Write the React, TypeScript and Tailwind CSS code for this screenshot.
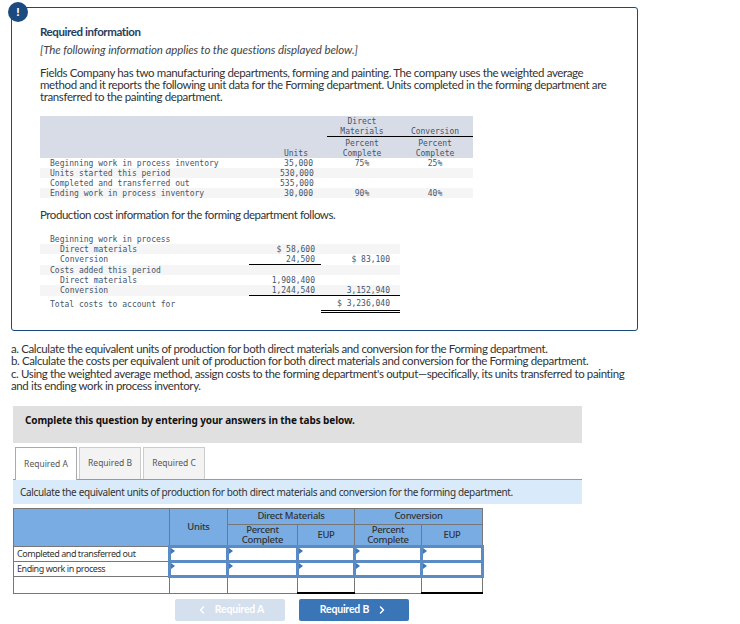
import { ChevronLeft, ChevronRight } from 'lucide-react';

const unitRows = [
  { label: 'Beginning work in process inventory', units: '35,000', dm: '75%', conv: '25%', bg: 'bg-white' },
  { label: 'Units started this period', units: '530,000', dm: '', conv: '', bg: 'bg-[#f5f5f5]' },
  { label: 'Completed and transferred out', units: '535,000', dm: '', conv: '', bg: 'bg-white' },
  { label: 'Ending work in process inventory', units: '30,000', dm: '90%', conv: '40%', bg: 'bg-[#f5f5f5]' },
];

const costRows = [
  { label: 'Beginning work in process', indent: false, a: '', b: '', h: 'h-[10px]', bg: 'bg-white', lineA: false, lineB: false },
  { label: 'Direct materials', indent: true, a: '$ 58,600', b: '', h: 'h-[10px]', bg: 'bg-[#f5f5f5]', lineA: false, lineB: false },
  { label: 'Conversion', indent: true, a: '24,500', b: '$ 83,100', h: 'h-[11px]', bg: 'bg-white', lineA: true, lineB: false },
  { label: 'Costs added this period', indent: false, a: '', b: '', h: 'h-[10px]', bg: 'bg-[#f5f5f5]', lineA: false, lineB: false },
  { label: 'Direct materials', indent: true, a: '1,908,400', b: '', h: 'h-[10px]', bg: 'bg-white', lineA: false, lineB: false },
  { label: 'Conversion', indent: true, a: '1,244,540', b: '3,152,940', h: 'h-[11px]', bg: 'bg-[#f5f5f5]', lineA: true, lineB: true },
];

function AnswerInput() {
  return (
    <td className="relative border-[3px] border-[#5b8bc4] p-0">
      <span className="absolute left-0 top-0 h-0 w-0 border-y-[3px] border-l-[4px] border-y-transparent border-l-[#3b78bd]" />
    </td>
  );
}

export default function App() {
  return (
    <div className="h-[624px] w-[740px] overflow-hidden bg-white font-['Lato','Open_Sans',sans-serif] text-[#333]">
      {/* Required information card */}
      <div className="relative ml-[11px] mt-[7px] h-[324px] w-[627px] rounded-[3px] border border-[#1a4a80] pl-[28px] pt-[17px]">
        <div className="absolute left-[-4px] top-[-6px] flex h-5 w-5 items-center justify-center rounded-full bg-[#1a4a80] text-[12px] font-black leading-none text-white">
          !
        </div>
        <h2 className="text-[11.5px] font-bold leading-[14px] tracking-[-0.4px] text-[#25405f]">Required information</h2>
        <p className="mt-1 text-[11.5px] italic leading-[14px] tracking-[-0.1px] text-[#444]">
          [The following information applies to the questions displayed below.]
        </p>
        <p className="mt-[10px] w-[570px] text-[11.5px] leading-[12px] tracking-[-0.38px]">
          Fields Company has two manufacturing departments, forming and painting. The company uses the weighted average
          method and it reports the following unit data for the Forming department. Units completed in the forming department are
          transferred to the painting department.
        </p>

        {/* Unit data */}
        <table className="mt-[13px] w-[433px] table-fixed font-['DejaVu_Sans_Mono',monospace] text-[8px] leading-[10px] text-[#44546a] [&_td]:pt-[2px] [&_td]:leading-[8px]">
          <colgroup>
            <col className="w-[240px]" />
            <col className="w-[34px]" />
            <col className="w-[13px]" />
            <col className="w-[70px]" />
            <col className="w-[76px]" />
          </colgroup>
          <thead className="bg-[#d8dce6]">
            <tr className="h-[20px]">
              <th colSpan={3} />
              <th className="border-b border-black align-bottom font-normal">
                <span className="inline-block translate-y-px">
                  Direct
                  <br />
                  Materials
                </span>
              </th>
              <th className="border-b border-black align-bottom font-normal">
                <span className="inline-block translate-y-px">Conversion</span>
              </th>
            </tr>
            <tr className="h-[21px]">
              <th />
              <th className="pr-[6px] text-right align-bottom font-normal">
                <span className="inline-block translate-y-px">Units</span>
              </th>
              <th />
              <th className="align-bottom font-normal">
                <span className="inline-block translate-y-px">
                  Percent
                  <br />
                  Complete
                </span>
              </th>
              <th className="align-bottom font-normal">
                <span className="inline-block translate-y-px">
                  Percent
                  <br />
                  Complete
                </span>
              </th>
            </tr>
          </thead>
          <tbody>
            {unitRows.map((row) => (
              <tr key={row.label} className={`h-[10px] ${row.bg}`}>
                <td className="whitespace-nowrap pl-[10px]">{row.label}</td>
                <td className="pr-[1px] text-right">{row.units}</td>
                <td />
                <td className="text-center">{row.dm}</td>
                <td className="text-center">{row.conv}</td>
              </tr>
            ))}
          </tbody>
        </table>

        <p className="mt-[10px] text-[11.5px] leading-[14px] tracking-[-0.45px]">Production cost information for the forming department follows.</p>

        {/* Cost data */}
        <table className="mt-[12px] w-[360px] table-fixed font-['DejaVu_Sans_Mono',monospace] text-[8px] text-[#44546a] [&_td]:pt-[2px] [&_td]:leading-[8px]">
          <colgroup>
            <col className="w-[209px]" />
            <col className="w-[72px]" />
            <col className="w-[79px]" />
          </colgroup>
          <tbody>
            {costRows.map((row, i) => (
              <tr key={i} className={`${row.h} ${row.bg}`}>
                <td className={`whitespace-nowrap ${row.indent ? 'pl-[20px]' : 'pl-[10px]'}`}>{row.label}</td>
                <td className={`pr-[6px] text-right ${row.lineA ? 'border-b border-black' : ''}`}>{row.a}</td>
                <td className={`pr-[10px] text-right ${row.lineB ? 'border-b border-black' : ''}`}>{row.b}</td>
              </tr>
            ))}
            <tr className="h-[16px]">
              <td className="pl-[10px]">Total costs to account for</td>
              <td />
              <td className="border-b-[3px] border-double border-black pr-[10px] text-right">$ 3,236,040</td>
            </tr>
          </tbody>
        </table>
      </div>

      {/* Questions */}
      <p className="ml-[11px] mt-[12px] w-[620px] text-[11.5px] leading-[12.4px] tracking-[-0.38px]">
        a. Calculate the equivalent units of production for both direct materials and conversion for the Forming department.
        <br />
        b. Calculate the costs per equivalent unit of production for both direct materials and conversion for the Forming department.
        <br />
        c. Using the weighted average method, assign costs to the forming department's output—specifically, its units transferred to painting
        and its ending work in process inventory.
      </p>

      <div className="ml-[13px] mt-[13px] w-[569px] font-['Noto_Sans',sans-serif]">
        <div className="flex h-[37px] items-center bg-[#e0e0e0] pb-[7px] pl-[12px] text-[10px] font-bold tracking-[-0.1px] text-[#111]">
          Complete this question by entering your answers in the tabs below.
        </div>

        {/* Tabs */}
        <div className="mt-[4px] flex h-[33px] gap-[2px] border-b border-[#999] pl-[2px] text-[8.5px] text-[#555]">
          <div className="flex h-[33px] w-[62px] items-center justify-center border border-b-0 border-[#aaa] bg-white pt-[1px]">Required A</div>
          <div className="flex h-[32px] w-[62px] items-center justify-center border border-b-0 border-[#ccc] bg-[#f3f3f3] pt-[1px]">Required B</div>
          <div className="flex h-[32px] w-[62px] items-center justify-center border border-b-0 border-[#ccc] bg-[#f3f3f3] pt-[1px]">Required C</div>
        </div>

        <div className="flex h-[24px] items-center bg-[#d9eafa] pl-[7px] pt-[1px] text-[10px] tracking-[-0.35px] text-[#333]">
          Calculate the equivalent units of production for both direct materials and conversion for the forming department.
        </div>

        {/* Answer table */}
        <table className="mt-[4px] h-[85px] w-[469px] table-fixed border border-[#777] text-[9.5px] leading-[10px] tracking-[-0.3px] text-[#333]">
          <colgroup>
            <col className="w-[156px]" />
            <col className="w-[58px]" />
            <col className="w-[70px]" />
            <col className="w-[57px]" />
            <col className="w-[67px]" />
            <col className="w-[61px]" />
          </colgroup>
          <thead className="bg-[#78ace3] text-center font-normal">
            <tr className="h-[16px]">
              <th rowSpan={2} className="border border-[#777]" />
              <th rowSpan={2} className="border border-[#777] font-medium">Units</th>
              <th colSpan={2} className="border border-[#777] font-medium">Direct Materials</th>
              <th colSpan={2} className="border border-[#777] font-medium">Conversion</th>
            </tr>
            <tr className="h-[22px]">
              <th className="border border-[#777] font-medium">Percent<br />Complete</th>
              <th className="border border-[#777] font-medium">EUP</th>
              <th className="border border-[#777] font-medium">Percent<br />Complete</th>
              <th className="border border-[#777] font-medium">EUP</th>
            </tr>
          </thead>
          <tbody>
            {['Completed and transferred out', 'Ending work in process'].map((label) => (
              <tr key={label} className="h-[15px]">
                <td className="whitespace-nowrap border border-[#777] pl-[3px] text-[9px] tracking-[-0.45px]">{label}</td>
                <AnswerInput />
                <AnswerInput />
                <AnswerInput />
                <AnswerInput />
                <AnswerInput />
              </tr>
            ))}
            <tr className="h-[17px]">
              <td className="border border-[#777]" />
              <td className="border border-[#777]" />
              <td className="border border-[#777]" />
              <td className="border-x border-x-[#777] border-y-2 border-y-black" />
              <td className="border border-[#777]" />
              <td className="border-x border-x-[#777] border-y-2 border-y-black" />
            </tr>
          </tbody>
        </table>

        {/* Nav buttons */}
        <div className="ml-[162px] mt-[5px] flex gap-[14px] font-['Lato',sans-serif] text-[10.5px] font-bold tracking-[-0.2px] text-white">
          <div className="flex h-[22px] w-[110px] items-center justify-center gap-[7px] rounded-[2px] bg-[#d4e0ee]">
            <ChevronLeft className="h-3 w-3" strokeWidth={3} />
            Required A
          </div>
          <div className="flex h-[22px] w-[110px] items-center justify-center gap-[7px] rounded-[2px] bg-[#3a75b8]">
            Required B
            <ChevronRight className="h-3 w-3" strokeWidth={3} />
          </div>
        </div>
      </div>
    </div>
  );
}
